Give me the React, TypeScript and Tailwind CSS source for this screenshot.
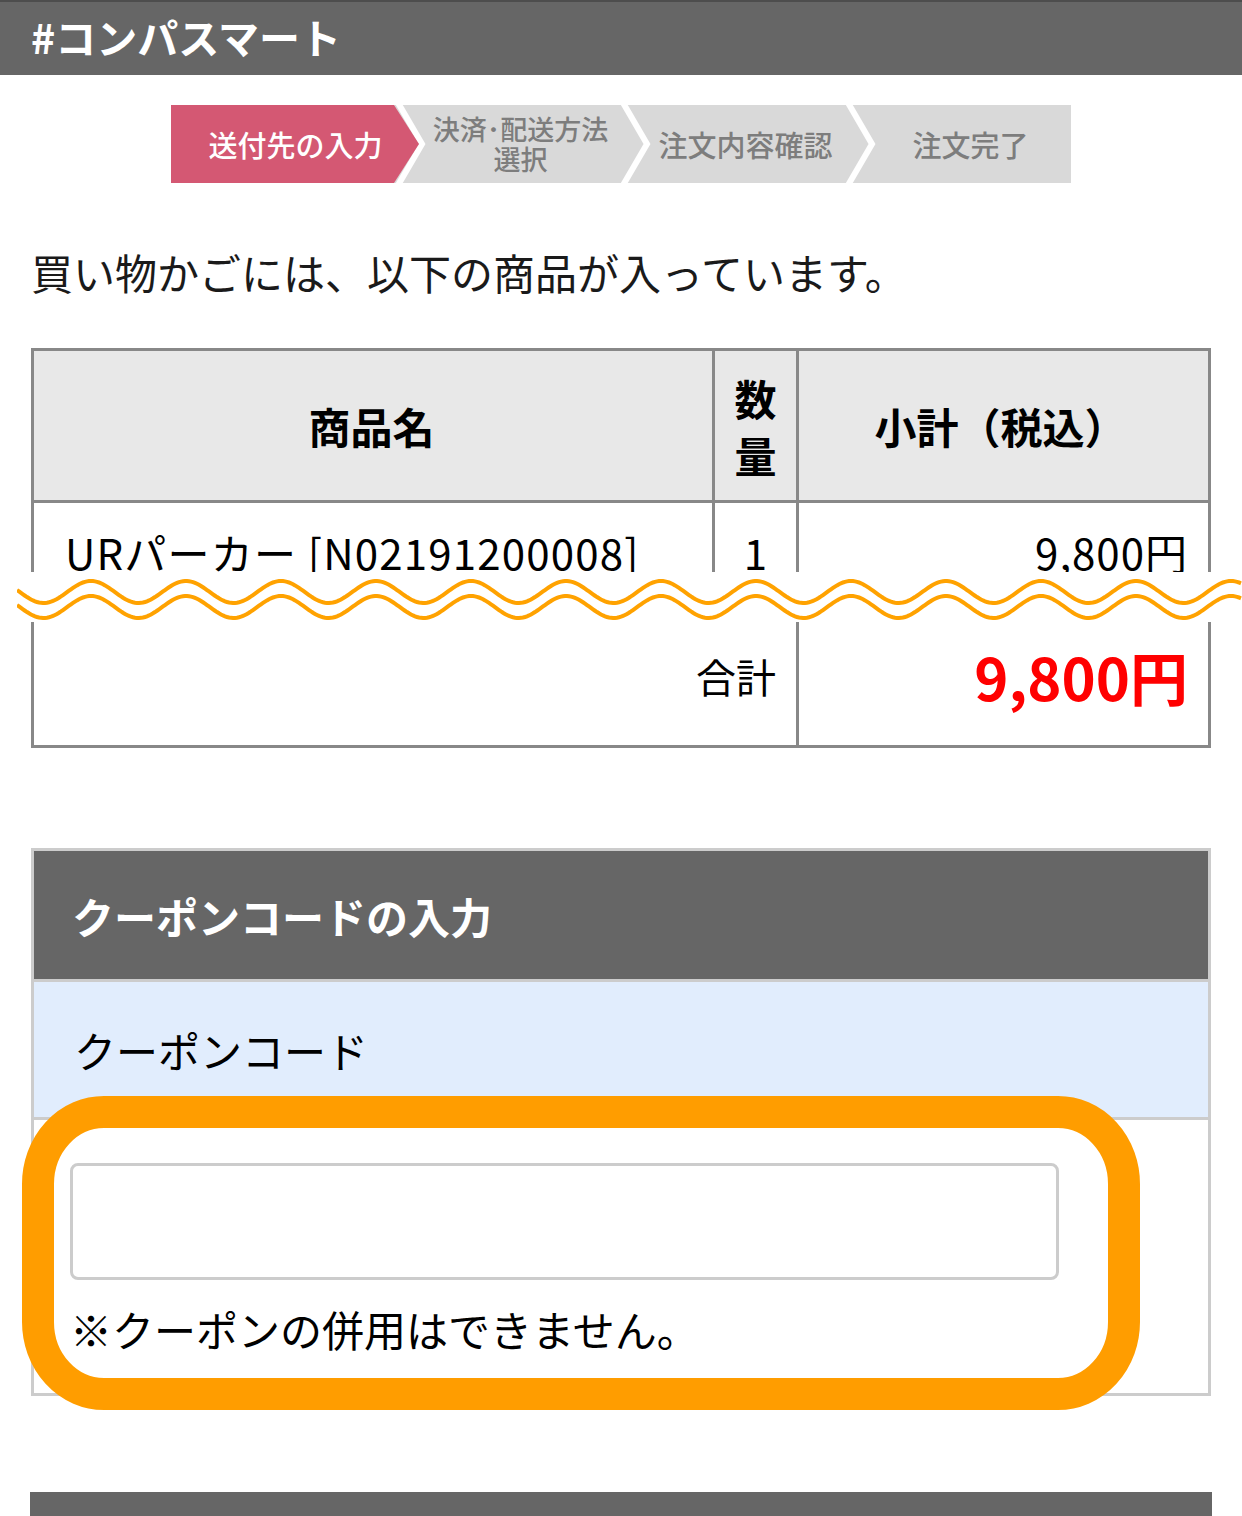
import React from "react";

// wavy "cut" mark drawn over the cart table
function wave(cy: number, width: number) {
  const period = 95;
  const amp = 11;
  const phase = 74;
  let d = "";
  for (let x = 0; x <= width; x += 2) {
    const y = cy - amp * Math.cos((2 * Math.PI * (x - phase)) / period);
    d += (x === 0 ? "M" : "L") + x + " " + y.toFixed(2) + " ";
  }
  return d;
}

function StepBar() {
  const steps = [
    { label: ["送付先の入力"], active: true },
    { label: ["決済･配送方法", "選択"], active: false },
    { label: ["注文内容確認"], active: false },
    { label: ["注文完了"], active: false },
  ];
  return (
    <div className="relative mx-auto mt-[30px] h-[78px] w-[900px]">
      <svg className="absolute inset-0" width="900" height="78" viewBox="0 0 900 78">
        <rect x="0" y="0" width="900" height="78" fill="#d9d9d9" />
        {[0, 1, 2].map((i) => {
          const x0 = 226 + 225 * i;
          return (
            <polyline
              key={i}
              points={`${x0},-4 ${x0 + 25},39 ${x0},82`}
              fill="none"
              stroke="#fff"
              strokeWidth="6"
            />
          );
        })}
        <polygon points="0,0 223,0 248,39 223,78 0,78" fill="#d45873" />
      </svg>
      <div className="relative flex h-full">
        {steps.map((s, i) => (
          <div
            key={i}
            className={
              "flex w-[225px] flex-col items-center justify-center pl-[24px] text-[29px] leading-[31px] font-medium " +
              (s.active ? "text-white" : "text-[#7d7d7d]")
            }
          >
            {s.label.map((l) => (
              <span key={l} className={s.label.length > 1 ? "text-[27px] leading-[30px]" : ""}>
                {l}
              </span>
            ))}
          </div>
        ))}
      </div>
    </div>
  );
}

function CartTable() {
  return (
    <div className="relative mx-[31px] mt-[46px]">
      <div className="border-[3px] border-[#888] text-[42px] text-black">
        <div className="grid h-[152px] grid-cols-[681px_84px_1fr] border-b-[3px] border-[#888] bg-[#e8e8e8] font-bold">
          <div className="flex items-center justify-center border-r-[3px] border-[#888] pr-[3px]">商品名</div>
          <div className="flex flex-col items-center justify-center border-r-[3px] border-[#888] leading-[57px]">
            <span>数</span>
            <span>量</span>
          </div>
          <div className="flex items-center justify-center pr-[6px]">小計（税込）</div>
        </div>
        <div className="grid h-[99px] grid-cols-[681px_84px_1fr] border-b-[3px] border-[#888]">
          <div className="flex items-center border-r-[3px] border-[#888] pl-[31px] tracking-[1.2px]">
            URパーカー [N02191200008]
          </div>
          <div className="flex items-center justify-center border-r-[3px] border-[#888]">1</div>
          <div className="flex items-center justify-end pr-[20px] tracking-[1px]">9,800円</div>
        </div>
        <div className="grid h-[143px] grid-cols-[765px_1fr] pt-[5px]">
          <div className="flex items-center justify-end border-r-[3px] border-[#888] pr-[20px] text-[40px]">合計</div>
          <div className="flex items-center justify-end pr-[20px] text-[58px] font-bold text-[#ff0000]">9,800円</div>
        </div>
      </div>
      <svg className="absolute left-[-14px] top-[224px]" width="1225" height="50" viewBox="0 0 1225 50">
        <rect x="0" y="0" width="1225" height="50" fill="#fff" />
        <path d={wave(20, 1225)} fill="none" stroke="#ffa200" strokeWidth="4" />
        <path d={wave(35, 1225)} fill="none" stroke="#ffa200" strokeWidth="4" />
      </svg>
    </div>
  );
}

function CouponBox() {
  return (
    <div className="relative mx-[31px] mt-[100px] border-[3px] border-[#ccc] text-[42px]">
      <div className="flex h-[128px] items-center bg-[#666] pl-[38px] font-bold text-white">
        クーポンコードの入力
      </div>
      <div className="flex h-[138px] items-center border-t-[3px] border-[#ccc] bg-[#e1edfd] pl-[40px] text-black">
        クーポンコード
      </div>
      <div className="h-[276px] border-t-[3px] border-[#ccc] bg-white pl-[36px] pt-[43px]">
        <input
          type="text"
          readOnly
          className="block h-[117px] w-[989px] rounded-[8px] border-[3px] border-[#ccc] bg-white outline-none"
        />
        <p className="mt-[19px] leading-[60px] text-black">※クーポンの併用はできません。</p>
      </div>
      <svg className="pointer-events-none absolute left-[-12px] top-[245px]" width="1120" height="314" viewBox="0 0 1120 314">
        <rect x="16" y="16" width="1086" height="282" rx="66" ry="72" fill="none" stroke="#ff9d00" strokeWidth="32" />
      </svg>
    </div>
  );
}

export default function App() {
  return (
    <div className="min-h-[1516px] w-[1242px] overflow-hidden bg-white font-['Noto_Sans_CJK_JP',sans-serif]">
      <div className="flex h-[75px] items-center border-t-[2px] border-[#4d4d4d] bg-[#666] pb-[4px] pl-[31px] text-[41px] font-bold text-white">
        #コンパスマート
      </div>
      <StepBar />
      <p className="ml-[31px] mt-[59px] text-[42px] leading-[60px] text-[#1a1a1a]">
        買い物かごには、以下の商品が入っています。
      </p>
      <CartTable />
      <CouponBox />
      <div className="mx-[30px] mt-[96px] h-[40px] bg-[#666]" />
    </div>
  );
}
